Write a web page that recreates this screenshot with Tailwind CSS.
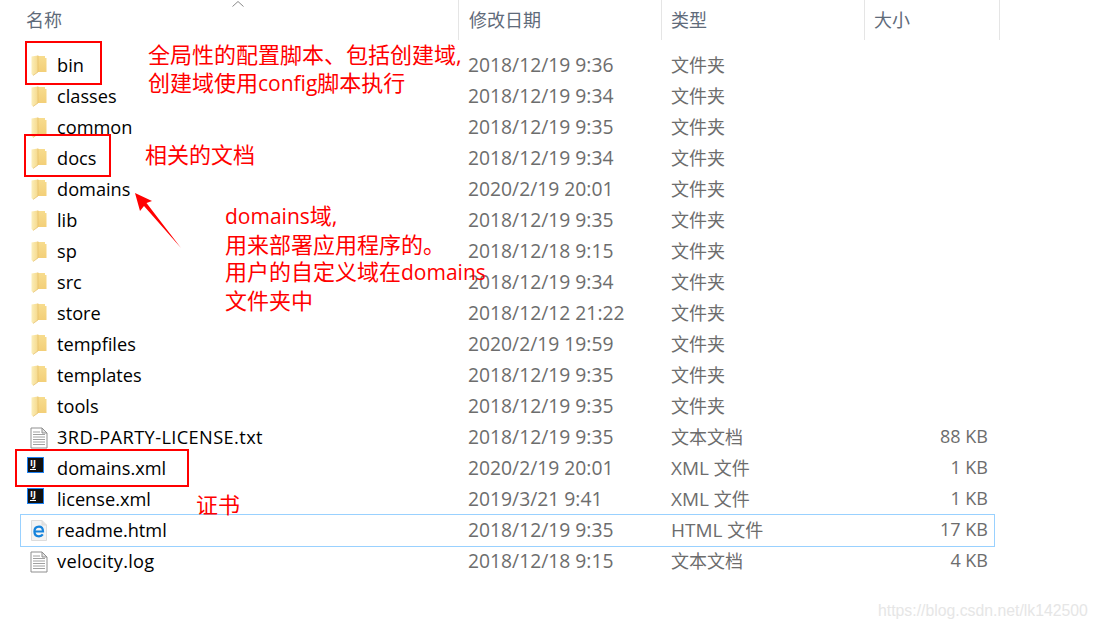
<!DOCTYPE html>
<html lang="zh">

<head>
  <meta charset="UTF-8">
  <title>文件夹</title>
  <script src="https://cdn.jsdelivr.net/npm/@tailwindcss/browser@4"></script>
</head>

<body class="bg-white">
  <svg class="absolute w-0 h-0">
    <defs>
      <linearGradient id="folderBack" x1="0" y1="0" x2="0" y2="1">
        <stop offset="0" stop-color="#f7dc8e" />
        <stop offset="1" stop-color="#f3cf78" />
      </linearGradient>
      <linearGradient id="folderFront" x1="0" y1="0" x2="1" y2="0">
        <stop offset="0" stop-color="#fbeeb9" />
        <stop offset="1" stop-color="#f5d98c" />
      </linearGradient>
    </defs>
    <symbol id="folder" viewBox="0 0 16 21">
      <path d="M6 1 H14 V3 H15.5 V17 H6 Z" fill="url(#folderBack)" />
      <path d="M0.5 1.5 L7 0.5 V17 L2 20.5 L0.5 19 Z" fill="url(#folderFront)" />
      <path d="M7 0.5 V17 L2 20.5" fill="none" stroke="#e5bf68" stroke-width=".7" />
    </symbol>
    <symbol id="textfile" viewBox="0 0 18 22">
      <path d="M1 1 H12 L17 6 V21 H1 Z" fill="#fff" stroke="#8f8f8f" />
      <path d="M12 1 V6 H17 Z" fill="#e4e4e4" stroke="#8f8f8f" />
      <path d="M3 5 H10 M3 7.5 H15 M3 10 H15 M3 12.5 H15 M3 15 H15 M3 17.5 H15" stroke="#a0a0a0" fill="none" />
    </symbol>
    <symbol id="iefile" viewBox="0 0 16 21">
      <path d="M0.5 0.5 H11 L15.5 5 V20.5 H0.5 Z" fill="#f3f3f3" stroke="#dcdcdc" />
      <path d="M11 0.5 V5 H15.5" fill="#e2e2e2" stroke="#dcdcdc" />
      <path d="M3.6 11.5 H12 C12 7.8 10.5 6.6 8 6.6 C5.2 6.6 3.4 8.6 3.4 11.5 C3.4 14.4 5.2 16.3 8 16.3 C9.6 16.3 10.9 15.7 11.8 14.4" fill="none" stroke="#1583dc" stroke-width="2.2" />
    </symbol>
  </svg>

  <div class="relative w-[1098px] h-[629px] overflow-hidden font-['Open_Sans','Noto_Sans_CJK_SC',sans-serif] text-[18px]">
    <!-- column headers -->
    <div class="grid grid-cols-[458px_203px_203px_136px] w-[1000px] h-10 text-[#5f6b7a]">
      <div class="pl-[26px] pt-[8px] leading-6">名称</div>
      <div class="pl-[10px] pt-[8px] leading-6 border-l border-[#e5e5e5]">修改日期</div>
      <div class="pl-[9px] pt-[8px] leading-6 border-l border-[#e5e5e5]">类型</div>
      <div class="pl-[9px] pt-[8px] leading-6 border-l border-r border-[#e5e5e5]">大小</div>
    </div>

    <!-- file rows -->
    <div id="rows" class="mt-[10px] ml-[21px] w-[973px] text-[#6d6d6d]"></div>

    <!-- sort arrow -->
    <svg class="absolute left-[231px] top-0" width="14" height="8" viewBox="0 0 14 8">
      <path d="M1.5 6.5 L7 1.5 L12.5 6.5" fill="none" stroke="#8a8a8a" />
    </svg>

    <!-- annotations -->
    <div class="absolute left-[25px] top-[41px] w-[77px] h-[44px] border-2 border-[#f00]"></div>
    <div class="absolute left-[24px] top-[134px] w-[87px] h-[43px] border-2 border-[#f00]"></div>
    <div class="absolute left-[15px] top-[449px] w-[174px] h-[38px] border-2 border-[#f00]"></div>

    <div class="absolute left-[148px] top-[41px] text-[22px] leading-[27.5px] text-[#f00] whitespace-nowrap">全局性的配置脚本、包括创建域,<br>创建域使用<span class="text-[21px]">config</span>脚本执行</div>
    <div class="absolute left-[145px] top-[140px] text-[22px] leading-[28px] text-[#f00] whitespace-nowrap">相关的文档</div>
    <div class="absolute left-[225px] top-[202px] text-[22px] leading-[27.5px] text-[#f00] whitespace-nowrap"><span class="text-[21px]">domains</span>域,<br>用来部署应用程序的。<br>用户的自定义域在<span class="text-[21px]">domains</span><br>文件夹中</div>
    <div class="absolute left-[196px] top-[490px] text-[22px] leading-[28px] text-[#f00] whitespace-nowrap">证书</div>

    <svg class="absolute left-[130px] top-[188px]" width="56" height="64" viewBox="0 0 56 64">
      <path d="M5 5 L22 13 L16.5 15 L51 60 L14 18 L10 23 Z" fill="#f00" />
    </svg>

    <div class="absolute left-[878px] top-[600px] text-[15.8px] leading-[22px] text-[#e6e6e6] font-['Liberation_Sans',sans-serif] whitespace-nowrap">https://blog.csdn.net/lk142500</div>
  </div>

  <script>
    const folder = '<svg class="w-[16px] h-[21px]"><use href="#folder" /></svg>';
    const textfile = '<svg class="w-[18px] h-[22px] -ml-[1px]"><use href="#textfile" /></svg>';
    const idea = '<div class="w-[17px] h-[16px] mb-[7px] -ml-[4px] bg-[#111] border border-[#1e80f0] text-white text-[9px] leading-[10px] font-bold pl-[2px] font-[\'Liberation_Mono\']">IJ<div class="w-[6px] h-px bg-white mt-[1px]"></div></div>';
    const ie = '<svg class="w-[16px] h-[21px]"><use href="#iefile" /></svg>';

    const files = [
      [folder, 'bin', '2018/12/19 9:36', '文件夹', ''],
      [folder, 'classes', '2018/12/19 9:34', '文件夹', ''],
      [folder, 'common', '2018/12/19 9:35', '文件夹', ''],
      [folder, 'docs', '2018/12/19 9:34', '文件夹', ''],
      [folder, 'domains', '2020/2/19 20:01', '文件夹', ''],
      [folder, 'lib', '2018/12/19 9:35', '文件夹', ''],
      [folder, 'sp', '2018/12/18 9:15', '文件夹', ''],
      [folder, 'src', '2018/12/19 9:34', '文件夹', ''],
      [folder, 'store', '2018/12/12 21:22', '文件夹', ''],
      [folder, 'tempfiles', '2020/2/19 19:59', '文件夹', ''],
      [folder, 'templates', '2018/12/19 9:35', '文件夹', ''],
      [folder, 'tools', '2018/12/19 9:35', '文件夹', ''],
      [textfile, '<span class="tracking-[.4px]">3RD-PARTY-LICENSE.txt</span>', '2018/12/19 9:35', '文本文档', '88 KB'],
      [idea, 'domains.xml', '2020/2/19 20:01', '<span class="text-[19px]">XML</span> 文件', '1 KB'],
      [idea, 'license.xml', '2019/3/21 9:41', '<span class="text-[19px]">XML</span> 文件', '1 KB'],
      [ie, 'readme.html', '2018/12/19 9:35', '<span class="text-[19px]">HTML</span> 文件', '17 KB'],
      [textfile, '<span class="tracking-[.3px]">velocity.log</span>', '2018/12/18 9:15', '文本文档', '4 KB'],
    ];

    document.getElementById('rows').innerHTML = files.map(([icon, name, date, type, size]) => `
      <div class="grid grid-cols-[447px_203px_217px_100px] items-center h-[31px] ${name === 'readme.html' ? 'outline outline-[#99d1ff]' : ''}">
        <div class="flex items-center">
          <div class="w-[36px] pl-[10px] flex items-center justify-start">${icon}</div>
          <span class="text-black text-[18.2px] leading-[29px]">${name}</span>
        </div>
        <div class="text-[19.3px] leading-[29px] pb-[2px]">${date}</div>
        <div>${type}</div>
        <div class="text-right leading-[29px] pb-[2px]">${size}</div>
      </div>`).join('');
  </script>
</body>

</html>
